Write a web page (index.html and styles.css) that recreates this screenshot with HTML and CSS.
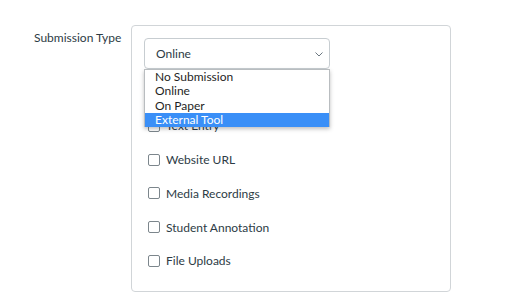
FILE: index.html
```html
<!DOCTYPE html>
<html lang="en">
<head>
  <meta charset="UTF-8">
  <meta name="viewport" content="width=device-width, initial-scale=1.0">
  <title>Submission Type</title>
  <link rel="stylesheet" href="styles.css">
</head>
<body>
  <div class="form-row">
    <div class="form-label">Submission Type</div>
    <div class="card">
      <div class="select">
        <span class="select-value">Online</span>
        <svg class="chevron" width="8" height="5" viewBox="0 0 8 5">
          <path d="M0.5 0.5 L4 4 L7.5 0.5" fill="none" stroke="#6b7780" stroke-width="1"/>
        </svg>
        <ul class="options">
          <li>No Submission</li>
          <li>Online</li>
          <li>On Paper</li>
          <li class="active">External Tool</li>
        </ul>
      </div>

      <div class="checks">
        <label class="check"><span class="box"></span>Text Entry</label>
        <label class="check"><span class="box"></span>Website URL</label>
        <label class="check"><span class="box"></span>Media Recordings</label>
        <label class="check"><span class="box"></span>Student Annotation</label>
        <label class="check"><span class="box"></span>File Uploads</label>
      </div>
    </div>
  </div>
</body>
</html>
```

FILE: styles.css
```css
* {
  margin: 0;
  padding: 0;
  box-sizing: border-box;
}

body {
  font-family: Lato, "Liberation Sans", sans-serif;
  font-size: 12px;
  color: #2d3b45;
  background-color: #fff;
}

.form-row {
  display: flex;
  padding-top: 25px;
}

.form-label {
  width: 131px;
  padding-left: 34px;
  padding-top: 5px;
}

.card {
  width: 320px;
  height: 267px;
  border: 1px solid #d1d5d8;
  border-radius: 4px;
  padding: 12px 0 0 12px;
}

.select {
  position: relative;
  display: flex;
  align-items: center;
  justify-content: space-between;
  width: 186px;
  height: 31px;
  padding: 0 6px 0 11px;
  border: 1px solid #c7cdd1;
  border-radius: 4px;
}

.chevron {
  margin-top: 1px;
}

.options {
  position: absolute;
  top: 30px;
  left: -1px;
  width: 186px;
  list-style: none;
  background-color: #fff;
  border: 1px solid #b9bdc0;
  border-bottom: none;
  box-shadow: 0 2px 4px rgba(0, 0, 0, 0.25);
  color: #1f1f1f;
  z-index: 2;
}

.options li {
  height: 14.25px;
  line-height: 14.25px;
  padding-left: 10px;
}

.options li.active {
  background-color: #3a8ff7;
  color: #fff;
}

.checks {
  margin-top: 40px;
  padding-left: 4px;
}

.check {
  display: flex;
  align-items: center;
  height: 33.75px;
}

.box {
  width: 12px;
  height: 12px;
  border: 1px solid #7c868c;
  border-radius: 2px;
  margin-right: 6px;
}
```
